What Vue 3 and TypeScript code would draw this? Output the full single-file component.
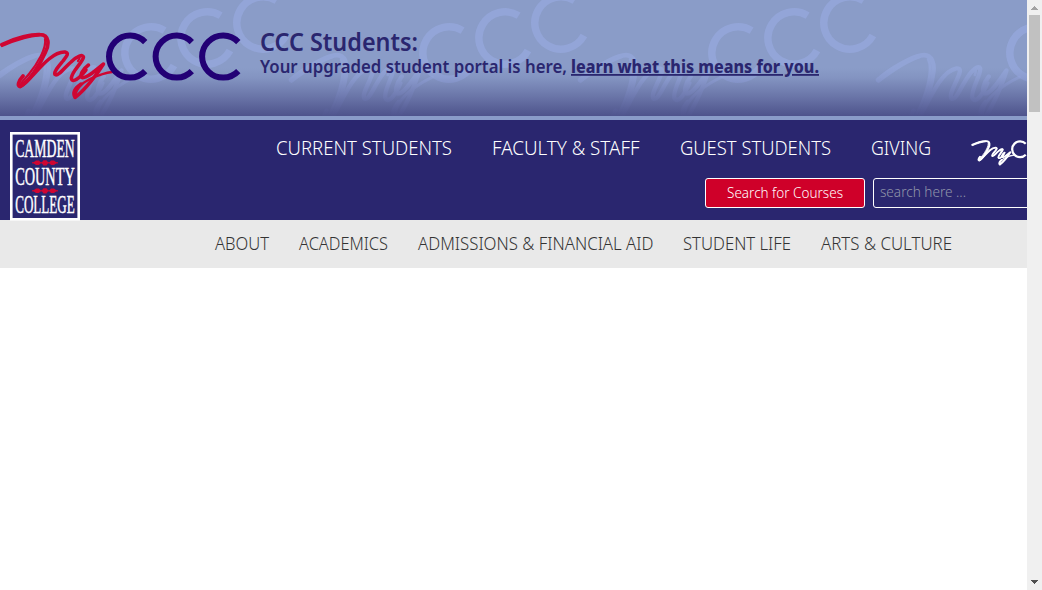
<script setup lang="ts">
interface Label {
  text: string
  width: number
}

const audiences: Label[] = [
  { text: 'CURRENT STUDENTS', width: 176 },
  { text: 'FACULTY & STAFF', width: 147.5 },
  { text: 'GUEST STUDENTS', width: 151 },
  { text: 'GIVING', width: 60 },
]

const sections: Label[] = [
  { text: 'ABOUT', width: 54 },
  { text: 'ACADEMICS', width: 89 },
  { text: 'ADMISSIONS & FINANCIAL AID', width: 235.5 },
  { text: 'STUDENT LIFE', width: 108 },
  { text: 'ARTS & CULTURE', width: 131 },
]

const watermarks: number[] = [151, 449, 738, 1036]
</script>

<template>
  <div class="window">
    <div class="page">
      <section class="banner">
        <svg class="pattern" width="1027" height="116" viewBox="0 0 1027 116" aria-hidden="true">
          <defs>
            <g id="script-my" fill="none" stroke-linecap="round" stroke-linejoin="round">
              <path stroke-width="3.7" d="M1.8 44.6C15 38 33 34 40 34.6C50 35 49 45 45.500 52C40 65 28 83 20 86.500C17 86 18.500 81 23 76" />
              <path stroke-width="3.5" d="M20 86.500C27 84 37 69 49 59C55 54 61 51.800 65 52C70 53 66 57 63 61C58 67 53.500 72 55 74.500C58 77 65 67 71 62C77 56 83 54 83.500 57C83 62 72 71 71.300 78C72 84 80 78 86 70" />
              <path stroke-width="3.5" d="M88.500 65C83 69 79 76 82 77.500C87 79 98 68 103.500 64C98 73 85 90 75 97.500C72.500 93 75 88 81 84" />
              <path stroke-width="2.4" d="M75 97C76 86 86 81 92 78C99 75 105 73 112 72" />
              <path stroke-width="2.2" d="M2 46C14 41 29 36 39 35.500M45 39C47 48 37 64 29 74C26 78 23 80 21 84M76 58C80 55 81 56 78 61" />
            </g>
            <g id="three-c" fill="none" stroke-width="6">
              <path d="M145.2 42.1A21 21 0 1 0 145.2 71.1" />
              <path d="M191.8 42.1A21 21 0 1 0 191.8 71.1" />
              <path d="M238.3 42.1A21 21 0 1 0 238.3 71.1" />
            </g>
            <linearGradient id="banner-shade" x1="0" y1="0" x2="0" y2="1">
              <stop offset="0" stop-color="#484c86" stop-opacity="0" />
              <stop offset=".2" stop-color="#484c86" stop-opacity=".1" />
              <stop offset=".58" stop-color="#484c86" stop-opacity=".47" />
              <stop offset="1" stop-color="#484c86" stop-opacity=".91" />
            </linearGradient>
          </defs>
          <g
            v-for="x in watermarks"
            :key="x"
            stroke="#98aae0"
            :transform="`translate(${x} 53) rotate(-15) scale(1.245) translate(-130 -56.6)`"
          >
            <use href="#script-my" opacity=".6" />
            <use href="#three-c" opacity=".68" />
          </g>
          <rect y="68" width="1027" height="48" fill="url(#banner-shade)" />
        </svg>
        <svg class="portal-logo" width="260" height="116" viewBox="0 0 260 116" role="img" aria-label="MyCCC">
          <use href="#script-my" stroke="#cf0632" />
          <use href="#three-c" stroke="#220075" />
        </svg>
        <div class="notice">
          <svg width="600" height="116" viewBox="0 0 600 116">
            <text class="notice-title" x="0" y="51" textLength="158" lengthAdjust="spacingAndGlyphs">CCC Students:</text>
            <text class="notice-body" x="0" y="73" textLength="307" lengthAdjust="spacingAndGlyphs">Your upgraded student portal is here,</text>
            <a href="#">
              <text class="notice-link" x="311" y="73" textLength="248" lengthAdjust="spacingAndGlyphs">learn what this means for you.</text>
            </a>
          </svg>
        </div>
      </section>

      <header class="header">
        <svg class="seal" width="70" height="88" viewBox="0 0 70 88" role="img">
          <rect x="1.3" y="1.3" width="67.4" height="86" fill="#2a266f" stroke="#fff" stroke-width="2.6" />
          <g class="seal-text">
            <text x="5.2" y="24.6" textLength="59.5" lengthAdjust="spacingAndGlyphs">CAMDEN</text>
            <text x="5.2" y="52.8" textLength="59.5" lengthAdjust="spacingAndGlyphs">COUNTY</text>
            <text x="5.2" y="80.8" textLength="59.5" lengthAdjust="spacingAndGlyphs">COLLEGE</text>
          </g>
          <g v-for="y in [30.8, 58.8]" :key="y" fill="#cf0632" :transform="`translate(35 ${y})`">
            <path d="M-13 -.6H13V.6H-13Z" />
            <path d="M-12 0L-9 -2.200H-6L-4 0L-6 2.200H-9ZM-3.500 0L-1.500 -2.600H1.500L3.500 0L1.500 2.600H-1.500ZM4 0L6 -2.200H9L12 0L9 2.200H6Z" />
          </g>
        </svg>
        <div class="tools">
          <nav class="audiences">
            <a v-for="item in audiences" :key="item.text" href="#">
              <svg :width="item.width" height="30">
                <text x="0" y="21" :textLength="item.width" lengthAdjust="spacingAndGlyphs">{{ item.text }}</text>
              </svg>
            </a>
            <svg class="small-logo" width="94" height="30" viewBox="0 0 94 30" role="img" aria-label="MyCCC">
              <g stroke="#fff" transform="translate(.3 -6) scale(.375)">
                <use href="#script-my" />
                <use href="#script-my" x="1.3" y=".8" />
                <use href="#three-c" />
              </g>
            </svg>
          </nav>
          <div class="search-row">
            <button type="button">
              <svg width="116" height="28">
                <text x="0" y="19" textLength="116" lengthAdjust="spacingAndGlyphs">Search for Courses</text>
              </svg>
            </button>
            <div class="search">
              <svg width="86" height="28">
                <text x="0" y="18" textLength="86" lengthAdjust="spacingAndGlyphs">search here ...</text>
              </svg>
            </div>
          </div>
        </div>
      </header>

      <nav class="sections">
        <a v-for="item in sections" :key="item.text" href="#">
          <svg :width="item.width" height="48">
            <text x="0" y="30" :textLength="item.width" lengthAdjust="spacingAndGlyphs">{{ item.text }}</text>
          </svg>
        </a>
      </nav>
    </div>

    <div class="scrollbar" aria-hidden="true">
      <svg width="15" height="15"><path d="M4 10V9H5V8H6V7H7V6H8V7H9V8H10V9H11V10Z" fill="#a3a3a3" /></svg>
      <div class="thumb"></div>
      <svg class="down" width="15" height="15"><path d="M4 5H11V6H10V7H9V8H8V9H7V8H6V7H5V6H4Z" fill="#505050" /></svg>
    </div>
  </div>
</template>

<style>
body {
  margin: 0;
  overflow: hidden;
}
</style>

<style scoped>
.window {
  display: flex;
  width: 1042px;
  height: 590px;
  background: #fff;
  font-family: "Noto Sans", "Open Sans", sans-serif;
}

svg {
  display: block;
  flex: none;
  overflow: visible;
}

.page {
  width: 1027px;
  overflow: hidden;
}

.banner {
  position: relative;
  display: flex;
  box-sizing: border-box;
  height: 120px;
  border-bottom: 4px solid #8a9cc9;
  background: #8a9cc8;
}

.pattern {
  position: absolute;
  top: 0;
  left: 0;
  overflow: hidden;
}

.portal-logo,
.notice {
  position: relative;
}

.notice text {
  fill: #2a266f;
}

.notice-title {
  font-size: 24.5px;
  font-weight: 600;
}

.notice-body {
  font-size: 18px;
  font-weight: 650;
}

.notice-link {
  font-size: 18px;
  font-weight: 800;
  text-decoration: underline;
}

.header {
  display: flex;
  height: 100px;
  background: #2a266f;
}

.seal {
  margin: 12px 0 0 10px;
}

.seal-text {
  fill: #fff;
  stroke: #fff;
  stroke-width: 0.45px;
  font-family: "Liberation Serif", serif;
  font-size: 25px;
}

.tools {
  margin: 14px 0 0 196px;
}

.audiences {
  display: flex;
  gap: 40.2px;
}

.audiences text {
  fill: #fff;
  font-size: 19.6px;
  font-weight: 300;
}

.search-row {
  display: flex;
  gap: 8px;
  margin: 14px 0 0 429px;
}

button {
  display: flex;
  box-sizing: border-box;
  width: 160px;
  height: 30px;
  padding: 0 0 0 21px;
  border: 1px solid #fff;
  border-radius: 3px;
  background: #cf0029;
  font-family: inherit;
}

button text {
  fill: #fff;
  font-size: 14.5px;
  font-weight: 300;
}

.search {
  box-sizing: border-box;
  flex: none;
  width: 200px;
  height: 30px;
  padding-left: 6px;
  border: 1px solid #fff;
  border-radius: 3px;
}

.search text {
  fill: #9296aa;
  font-size: 14.5px;
  font-weight: 300;
}

.sections {
  display: flex;
  gap: 29.9px;
  height: 48px;
  padding-left: 215px;
  background: #e9e9e9;
}

.sections text {
  fill: #333;
  font-size: 18.2px;
  font-weight: 300;
}

.scrollbar {
  display: flex;
  flex-direction: column;
  width: 15px;
  background: #f0f0f0;
}

.thumb {
  width: 11px;
  height: 97px;
  margin-left: 2px;
  background: #c1c1c1;
}

.down {
  margin-top: auto;
}
</style>
